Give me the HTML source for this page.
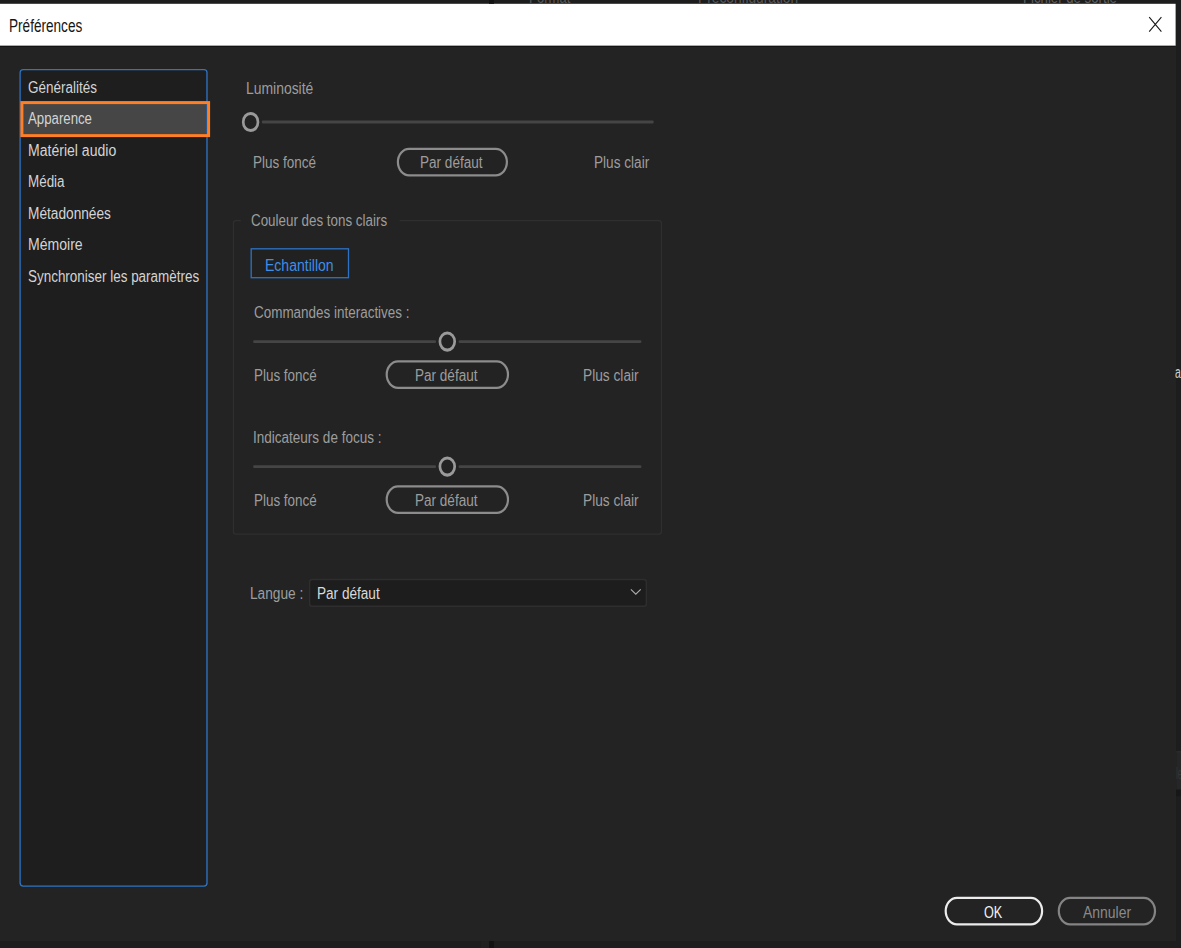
<!DOCTYPE html>
<html lang="fr"><head><meta charset="utf-8"><title>Préférences</title>
<style>
html,body{margin:0;padding:0;background:#1d1d1d;}
body{width:1181px;height:948px;position:relative;overflow:hidden;font-family:"Liberation Sans",sans-serif;}
#topclip{position:absolute;left:0;top:0;width:1181px;height:3.6px;overflow:hidden}
#bg{position:absolute;left:0;top:0;width:1181px;height:948px;display:block}
.t{position:absolute;white-space:nowrap;line-height:24px;height:24px;transform-origin:0 0;font-kerning:none;font-family:"Liberation Sans",sans-serif;}
</style></head><body>
<svg id="bg" width="1181" height="948" viewBox="0 0 1181 948">
<rect x="0" y="0" width="1181" height="948" fill="#1d1d1d"/>
<rect x="0" y="4" width="1176" height="937" fill="#232323"/>
<rect x="0" y="3.8" width="1175.6" height="42" fill="#ffffff"/>
<rect x="0" y="45.8" width="1175.6" height="1" fill="#121212"/>
<rect x="489" y="0" width="5" height="3.8" fill="#121212"/>
<rect x="489" y="941" width="5" height="7" fill="#121212"/>
<rect x="481" y="941" width="8" height="7" fill="#202020"/>
<path d="M1149.2 17.2 L1161.4 31.6 M1161.4 17.2 L1149.2 31.6" stroke="#1a1a1a" stroke-width="1.1" fill="none"/>
<rect x="19.6" y="69.3" width="187.9" height="817.3" rx="2.8" fill="#1e1e1e"/>
<path d="M20.15 72.6 V883.2 M207 72.6 V883.2" fill="none" stroke="#2a5c99" stroke-width="1.85"/>
<path d="M20.15 72.7 Q20.15 69.6 23.2 69.6 H204 Q207 69.6 207 72.7 M20.15 883.1 Q20.15 886.1 23.2 886.1 H204 Q207 886.1 207 883.1" fill="none" stroke="#2e74c2" stroke-width="1.3"/>
<rect x="23" y="104" width="183" height="30" fill="#464646"/>
<rect x="21.9" y="102.6" width="186.7" height="33" fill="none" stroke="#ff7f27" stroke-width="3"/>
<rect x="261.90" y="120.60" width="391.70" height="2.8" rx="1" fill="#454545"/><g transform="translate(250.6 122.0) scale(0.865 1)"><circle r="8.55" fill="none" stroke="#9a9a9a" stroke-width="3.1"/></g>
<rect x="397.90" y="148.90" width="109.00" height="26.40" rx="11.22" ry="13.20" fill="none" stroke="#8c8c8c" stroke-width="2.2"/>
<path d="M240.9 220.6 H236 Q233.4 220.6 233.4 223.2 V531.6 Q233.4 534.2 236 534.2 H658.8 Q661.4 534.2 661.4 531.6 V223.2 Q661.4 220.6 658.8 220.6 H399.6" fill="none" stroke="#2f2f2f" stroke-width="1.2"/>
<rect x="251.2" y="248.8" width="97.3" height="28.9" fill="#212121" stroke="#2d72c4" stroke-width="1.3"/>
<rect x="253.2" y="340.15" width="182.80" height="2.8" rx="1" fill="#454545"/><rect x="458.60" y="340.15" width="182.80" height="2.8" rx="1" fill="#454545"/><g transform="translate(447.3 341.55) scale(0.865 1)"><circle r="8.55" fill="none" stroke="#9a9a9a" stroke-width="3.1"/></g>
<rect x="386.70" y="361.30" width="121.30" height="26.50" rx="11.26" ry="13.25" fill="none" stroke="#8c8c8c" stroke-width="2.2"/>
<rect x="253.2" y="465.15" width="182.80" height="2.8" rx="1" fill="#454545"/><rect x="458.60" y="465.15" width="182.80" height="2.8" rx="1" fill="#454545"/><g transform="translate(447.3 466.55) scale(0.865 1)"><circle r="8.55" fill="none" stroke="#9a9a9a" stroke-width="3.1"/></g>
<rect x="386.70" y="486.30" width="121.30" height="26.50" rx="11.26" ry="13.25" fill="none" stroke="#8c8c8c" stroke-width="2.2"/>
<rect x="309.6" y="579.5" width="336.8" height="26.8" rx="2.5" fill="#1d1d1d" stroke="#2e2e2e" stroke-width="1.4"/>
<path d="M630.9 589.4 L635.8 594.1 L640.7 589.4" fill="none" stroke="#ababab" stroke-width="1.2"/>
<rect x="945.70" y="897.90" width="96.40" height="26.40" rx="11.22" ry="13.20" fill="none" stroke="#ececec" stroke-width="2.2"/>
<rect x="1058.80" y="897.90" width="96.20" height="26.40" rx="11.22" ry="13.20" fill="none" stroke="#848484" stroke-width="2.2"/>
<rect x="1176.2" y="751.6" width="5" height="38" fill="#262626"/>
<rect x="1176.2" y="789.6" width="5" height="6.5" fill="#171717"/>
<rect x="1176.2" y="751.3" width="5" height="1" fill="#2f2f2f"/>
</svg>
<div id="topclip">
<span class="t" style="left:529.33px;top:-14.00px;font-size:16px;color:#585858;transform:scaleX(0.8152);">Format</span>
<span class="t" style="left:698.27px;top:-14.00px;font-size:16px;color:#585858;transform:scaleX(0.8593);">Préconfiguration</span>
<span class="t" style="left:1023.02px;top:-14.00px;font-size:16px;color:#606060;transform:scaleX(0.8250);">Fichier de sortie</span>
</div>
<span class="t" style="left:8.94px;top:14.00px;font-size:18px;color:#161616;transform:scaleX(0.7550);">Préférences</span>
<span class="t" style="left:27.64px;top:76.00px;font-size:16px;color:#d4d4d4;transform:scaleX(0.8432);">Généralités</span>
<span class="t" style="left:28.37px;top:107.00px;font-size:16px;color:#d4d4d4;transform:scaleX(0.8264);">Apparence</span>
<span class="t" style="left:27.75px;top:139.00px;font-size:16px;color:#d4d4d4;transform:scaleX(0.8781);">Matériel audio</span>
<span class="t" style="left:27.80px;top:170.00px;font-size:16px;color:#d4d4d4;transform:scaleX(0.8390);">Média</span>
<span class="t" style="left:27.78px;top:202.00px;font-size:16px;color:#d4d4d4;transform:scaleX(0.8554);">Métadonnées</span>
<span class="t" style="left:27.75px;top:233.00px;font-size:16px;color:#d4d4d4;transform:scaleX(0.8776);">Mémoire</span>
<span class="t" style="left:27.70px;top:265.00px;font-size:16px;color:#d4d4d4;transform:scaleX(0.8404);">Synchroniser les paramètres</span>
<span class="t" style="left:246.06px;top:77.00px;font-size:16px;color:#9d9d9d;transform:scaleX(0.8700);">Luminosité</span>
<span class="t" style="left:252.84px;top:151.00px;font-size:16px;color:#9d9d9d;transform:scaleX(0.8423);">Plus foncé</span>
<span class="t" style="left:420.09px;top:151.00px;font-size:16px;color:#9d9d9d;transform:scaleX(0.8473);">Par défaut</span>
<span class="t" style="left:594.38px;top:151.00px;font-size:16px;color:#9d9d9d;transform:scaleX(0.8505);">Plus clair</span>
<span class="t" style="left:251.12px;top:209.00px;font-size:16px;color:#9d9d9d;transform:scaleX(0.8361);">Couleur des tons clairs</span>
<span class="t" style="left:265.05px;top:254.00px;font-size:16px;color:#3d8fe6;transform:scaleX(0.8763);">Echantillon</span>
<span class="t" style="left:253.92px;top:301.00px;font-size:16px;color:#9d9d9d;transform:scaleX(0.8408);">Commandes interactives :</span>
<span class="t" style="left:253.21px;top:426.00px;font-size:16px;color:#9d9d9d;transform:scaleX(0.8447);">Indicateurs de focus :</span>
<span class="t" style="left:253.80px;top:364.00px;font-size:16px;color:#9d9d9d;transform:scaleX(0.8388);">Plus foncé</span>
<span class="t" style="left:414.89px;top:364.00px;font-size:16px;color:#9d9d9d;transform:scaleX(0.8459);">Par défaut</span>
<span class="t" style="left:582.68px;top:364.00px;font-size:16px;color:#9d9d9d;transform:scaleX(0.8568);">Plus clair</span>
<span class="t" style="left:253.80px;top:489.00px;font-size:16px;color:#9d9d9d;transform:scaleX(0.8388);">Plus foncé</span>
<span class="t" style="left:414.89px;top:489.00px;font-size:16px;color:#9d9d9d;transform:scaleX(0.8459);">Par défaut</span>
<span class="t" style="left:582.68px;top:489.00px;font-size:16px;color:#9d9d9d;transform:scaleX(0.8568);">Plus clair</span>
<span class="t" style="left:249.78px;top:582.00px;font-size:16px;color:#9d9d9d;transform:scaleX(0.8562);">Langue :</span>
<span class="t" style="left:317.19px;top:582.00px;font-size:16px;color:#dadada;transform:scaleX(0.8486);">Par défaut</span>
<span class="t" style="left:983.61px;top:901.00px;font-size:16px;color:#f2f2f2;transform:scaleX(0.7887);">OK</span>
<span class="t" style="left:1083.37px;top:901.00px;font-size:16px;color:#8a8a8a;transform:scaleX(0.8724);">Annuler</span>
<span class="t" style="left:1175.27px;top:361.00px;font-size:16px;color:#cfcfcf;transform:scaleX(0.6545);">a</span>
<span class="t" style="left:1176.49px;top:762.00px;font-size:16px;color:#363636;transform:scaleX(0.4772);">le</span>
</body></html>
